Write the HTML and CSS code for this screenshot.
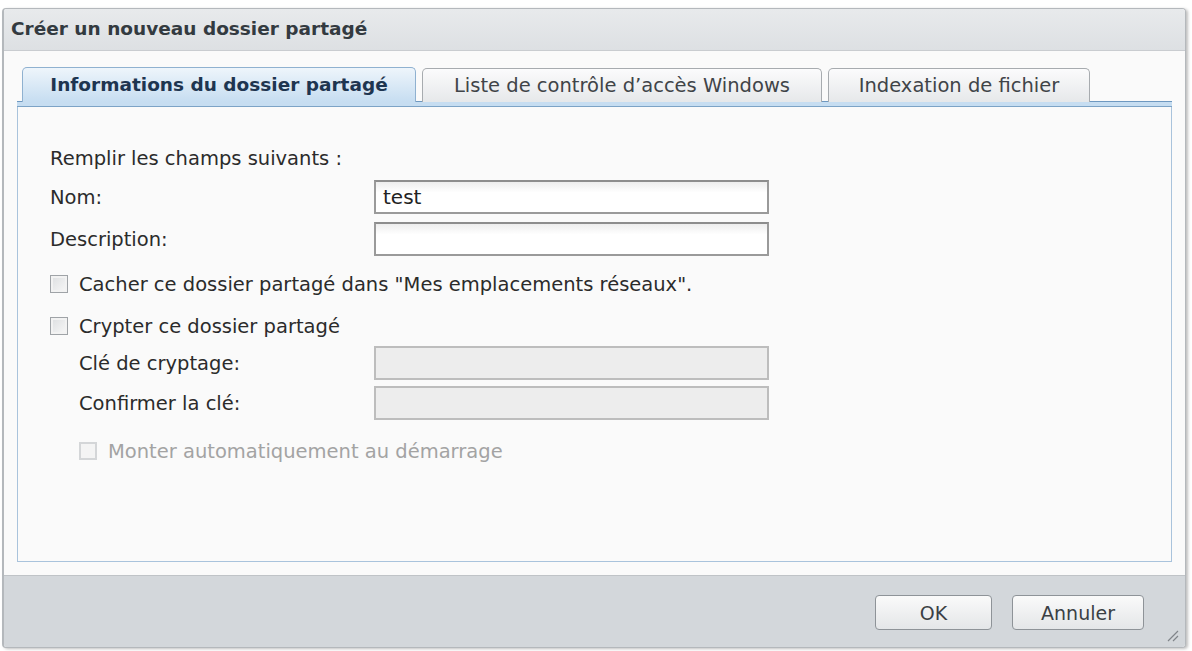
FILE: index.html
```html
<!DOCTYPE html>
<html lang="fr">
<head>
<meta charset="utf-8">
<title>Créer un nouveau dossier partagé</title>
<link rel="stylesheet" href="styles.css">
</head>
<body>
<div class="window">
  <div class="titlebar">Créer un nouveau dossier partagé</div>
  <div class="content">
    <div class="tabs">
      <div class="tab active tab-info">Informations du dossier partagé</div>
      <div class="tab tab-acl">Liste de contrôle d’accès Windows</div>
      <div class="tab tab-index">Indexation de fichier</div>
    </div>
    <div class="tab-bar"></div>
    <div class="panel">
      <div class="intro">Remplir les champs suivants :</div>
      <div class="row">
        <label class="lbl">Nom:</label>
        <div class="field">test</div>
      </div>
      <div class="row">
        <label class="lbl">Description:</label>
        <div class="field"></div>
      </div>
      <div class="check-row first">
        <span class="box"></span>
        <span>Cacher ce dossier partagé dans "Mes emplacements réseaux".</span>
      </div>
      <div class="check-row">
        <span class="box"></span>
        <span>Crypter ce dossier partagé</span>
      </div>
      <div class="sub">
        <div class="row">
          <label class="lbl">Clé de cryptage:</label>
          <div class="field disabled"></div>
        </div>
        <div class="row">
          <label class="lbl">Confirmer la clé:</label>
          <div class="field disabled"></div>
        </div>
        <div class="check-row muted">
          <span class="box"></span>
          <span>Monter automatiquement au démarrage</span>
        </div>
      </div>
    </div>
  </div>
  <div class="footer">
    <button class="btn btn-ok">OK</button>
    <button class="btn btn-cancel">Annuler</button>
    <svg class="grip" width="14" height="14" viewBox="0 0 14 14">
      <path d="M13 3 L3 13 M13 8 L8 13" stroke="#80858a" stroke-width="1.2" fill="none"/>
    </svg>
  </div>
</div>
</body>
</html>
```
FILE: styles.css
```css
* { box-sizing: border-box; }
html, body { margin: 0; padding: 0; }
body {
  background: #ffffff;
  font-family: "DejaVu Sans", Verdana, sans-serif;
  font-size: 19.5px;
  color: #2b2b2b;
  width: 1192px;
  height: 651px;
  overflow: hidden;
}
.window {
  margin: 8px 0 0 2px;
  width: 1184px;
  height: 640px;
  border: 1px solid #b4b8bc;
  border-left-width: 2px;
  border-radius: 4px;
  box-shadow: 2px 1px 3px rgba(0,0,0,0.25);
  display: flex;
  flex-direction: column;
  overflow: hidden;
  background: #fafafa;
}
.titlebar {
  height: 42px;
  flex: none;
  background: linear-gradient(#e8eaec, #dde0e3);
  border-bottom: 1px solid #c9ccd0;
  font-weight: bold;
  font-size: 18.5px;
  color: #333a40;
  padding: 9px 0 0 7px;
}
.content {
  flex: 1;
  padding: 16px 12px 13px 13px;
  display: flex;
  flex-direction: column;
}
.tabs {
  display: flex;
  gap: 6px;
  padding-left: 5px;
  height: 35px;
  flex: none;
  align-items: flex-end;
  position: relative;
  z-index: 1;
  margin-bottom: -1px;
}
.tab {
  height: 34px;
  border: 1px solid #a7abaf;
  border-bottom: none;
  border-radius: 5px 5px 0 0;
  background: linear-gradient(#fbfbfc, #e6e8ea);
  color: #404448;
  font-size: 19.5px;
  text-align: center;
  padding-top: 5px;
  white-space: nowrap;
}
.tab.active {
  height: 35px;
  background: linear-gradient(#eef5fb, #c6ddf1);
  border-color: #8fb1d0;
  color: #1e3550;
  font-weight: bold;
  font-size: 18.5px;
  padding-top: 6px;
}
.tab-info { width: 394px; }
.tab-acl { width: 400px; }
.tab-index { width: 262px; }
.tab-bar {
  height: 6px;
  flex: none;
  background: #c6ddf1;
  border-top: 1px solid #6e98c0;
  border-bottom: 1px solid #7ca3c6;
  margin-right: 1px;
}
.panel {
  flex: 1;
  border: 1px solid #a9c3dc;
  border-top: none;
  margin-right: 1px;
  background: #fafafa;
  padding: 33px 0 0 32px;
}
.intro {
  height: 36px;
  display: flex;
  align-items: center;
}
.row {
  display: flex;
  align-items: center;
  height: 42px;
}
.lbl { width: 324px; }
.field {
  width: 395px;
  height: 34px;
  border: 2px solid #9a9a9a;
  border-top-color: #8d8d8d;
  background: linear-gradient(#ededed, #ffffff 35%);
  padding: 3px 0 0 7px;
  font-size: 20px;
  color: #222;
}
.field.disabled {
  background: #ededed;
  border-color: #bdbdbd;
}
.check-row {
  display: flex;
  align-items: center;
  gap: 11px;
  height: 42px;
}
.check-row.first { margin-top: 3px; }
.box {
  width: 18px;
  height: 18px;
  flex: none;
  border: 1px solid #9fa3a7;
  background: linear-gradient(135deg, #dcdee0, #f8f8f8);
  box-shadow: inset 0 0 0 2px #f2f2f2;
}
.sub {
  padding-left: 29px;
  margin-top: -4px;
}
.sub .row { height: 40px; }
.sub .lbl { width: 295px; }
.check-row.muted {
  color: #a3a3a3;
  margin-top: 8px;
  height: 40px;
}
.check-row.muted .box {
  border: 2px solid #d4d6d8;
  background: #f4f4f4;
  box-shadow: none;
}
.footer {
  height: 72px;
  flex: none;
  background: #d3d7db;
  border-top: 1px solid #bfc3c7;
  display: flex;
  align-items: flex-start;
  justify-content: flex-end;
  padding: 19px 41px 0 0;
  gap: 20px;
  position: relative;
}
.btn {
  height: 35px;
  border: 1px solid #8e9398;
  border-radius: 4px;
  background: linear-gradient(#fafafa, #e4e6e8);
  font-family: "DejaVu Sans", Verdana, sans-serif;
  font-size: 19px;
  color: #3a3f44;
  padding: 0;
}
.btn-ok { width: 117px; }
.btn-cancel { width: 132px; }
.grip { position: absolute; right: 6px; bottom: 5px; }
```
